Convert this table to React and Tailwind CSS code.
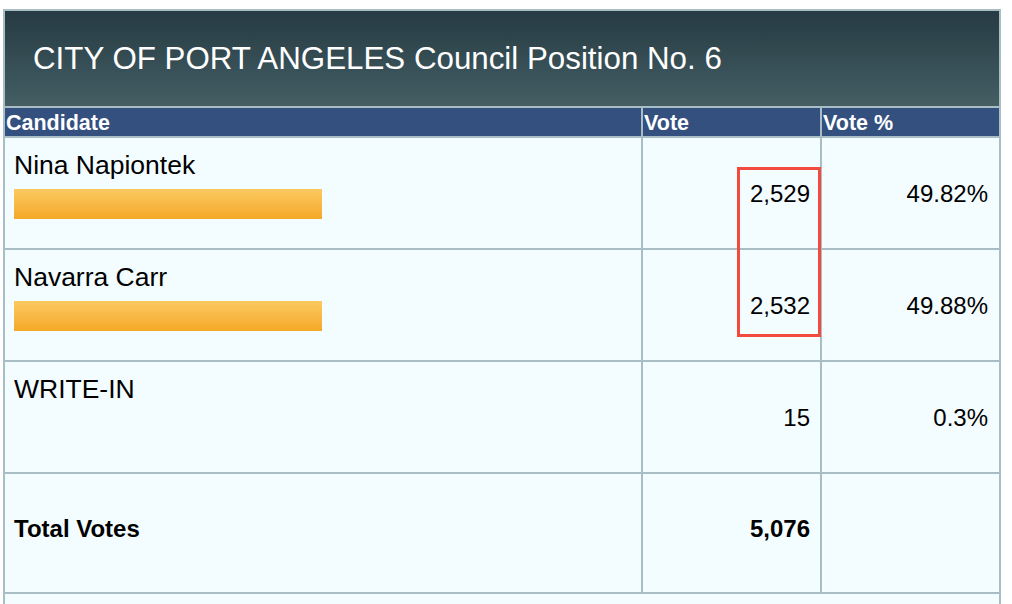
import React from "react";

const font = { fontFamily: '"Liberation Sans", Arial, Helvetica, sans-serif' };

function Bar() {
  return <div className="mt-[10px] h-[30px] w-[308px] bg-gradient-to-b from-[#fbc95f] to-[#f5a823]" />;
}

export default function App() {
  const rows = [
    { name: "Nina Napiontek", votes: "2,529", pct: "49.82%", bar: true },
    { name: "Navarra Carr", votes: "2,532", pct: "49.88%", bar: true },
    { name: "WRITE-IN", votes: "15", pct: "0.3%", bar: false },
  ];
  return (
    <div className="w-[1012px] h-[604px] overflow-hidden bg-white" style={font}>
      <div className="relative ml-[3px] mt-[9px] w-[998px] border-2 border-b-0 border-[#a8bdc4] bg-[#f3fcfe]">
        <div className="h-[97px] pl-[28px] pt-[32px] bg-gradient-to-b from-[#263b43] to-[#445e64] border-b-2 border-[#a8bdc4]">
          <div className="text-white text-[31.3px] leading-none">CITY OF PORT ANGELES Council Position No. 6</div>
        </div>
        <div className="flex h-[30px] bg-[#33507f] border-b-2 border-[#a8bdc4] text-white font-bold text-[21.5px] leading-none">
          <div className="w-[638px] border-r-2 border-[#a8bdc4] pl-[1px] pt-[3px] flex items-center">Candidate</div>
          <div className="w-[179px] border-r-2 border-[#a8bdc4] pl-[1px] pt-[3px] flex items-center">Vote</div>
          <div className="flex-1 pl-[1px] pt-[3px] flex items-center">Vote %</div>
        </div>
        {rows.map((r) => (
          <div key={r.name} className="flex h-[112px] border-b-2 border-[#a8bdc4] text-black">
            <div className="w-[638px] border-r-2 border-[#a8bdc4] pl-[9px] pt-[14px]">
              <div className="leading-none text-[26.5px]">{r.name}</div>
              {r.bar && <Bar />}
            </div>
            <div className="w-[179px] border-r-2 border-[#a8bdc4] pr-[10px] pt-[2px] flex items-center justify-end leading-none text-[24px]">{r.votes}</div>
            <div className="flex-1 pr-[11px] pt-[2px] flex items-center justify-end leading-none text-[24px]">{r.pct}</div>
          </div>
        ))}
        <div className="flex h-[120px] border-b-2 border-[#a8bdc4] text-black text-[24px] font-bold">
          <div className="w-[638px] border-r-2 border-[#a8bdc4] pl-[9px] flex items-center leading-none pb-[8px]">Total Votes</div>
          <div className="w-[179px] border-r-2 border-[#a8bdc4] pr-[10px] flex items-center justify-end leading-none pb-[8px]">5,076</div>
          <div className="flex-1" />
        </div>
        <div className="h-[40px]" />
        <div className="absolute left-[732px] top-[156px] w-[84px] h-[170px] border-[3px] border-[#f24a3d]" />
      </div>
    </div>
  );
}
